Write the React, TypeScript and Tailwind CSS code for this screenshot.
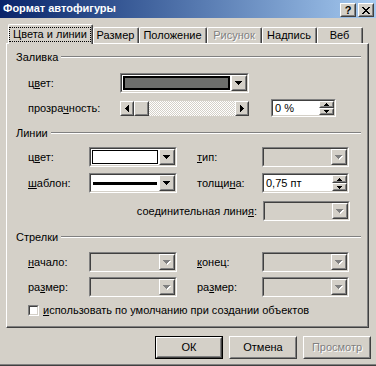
import React from "react";

type Kids = { className?: string; inner?: string; children?: React.ReactNode };

function Raised({ className = "", children }: Kids) {
  return (
    <div className={`shrink-0 bg-[#d4d0c8] border border-t-white border-l-white border-r-[#404040] border-b-[#404040] ${className}`}>
      <div className="w-full h-full flex items-center justify-center border border-t-[#d4d0c8] border-l-[#d4d0c8] border-r-[#808080] border-b-[#808080]">
        {children}
      </div>
    </div>
  );
}

function Sunken({ className = "", inner = "", children }: Kids) {
  return (
    <div className={`shrink-0 border border-t-[#808080] border-l-[#808080] border-r-white border-b-white ${className}`}>
      <div className={`w-full h-full flex border border-t-[#404040] border-l-[#404040] border-r-[#d4d0c8] border-b-[#d4d0c8] ${inner}`}>
        {children}
      </div>
    </div>
  );
}

// pixel triangles
function Down({ gray }: { gray?: boolean }) {
  const c = gray ? "#808080" : "#000";
  return (
    <svg width="8" height="5" viewBox="0 0 8 5" shapeRendering="crispEdges">
      {gray && (
        <g fill="#fff">
          <rect x="1" y="1" width="7" height="1" />
          <rect x="2" y="2" width="5" height="1" />
          <rect x="3" y="3" width="3" height="1" />
          <rect x="4" y="4" width="1" height="1" />
        </g>
      )}
      <g fill={c}>
        <rect x="0" y="0" width="7" height="1" />
        <rect x="1" y="1" width="5" height="1" />
        <rect x="2" y="2" width="3" height="1" />
        <rect x="3" y="3" width="1" height="1" />
      </g>
    </svg>
  );
}

function SmallArrow({ up }: { up?: boolean }) {
  return (
    <svg width="5" height="3" viewBox="0 0 5 3" shapeRendering="crispEdges" fill="#000">
      {up ? (
        <>
          <rect x="2" y="0" width="1" height="1" />
          <rect x="1" y="1" width="3" height="1" />
          <rect x="0" y="2" width="5" height="1" />
        </>
      ) : (
        <>
          <rect x="0" y="0" width="5" height="1" />
          <rect x="1" y="1" width="3" height="1" />
          <rect x="2" y="2" width="1" height="1" />
        </>
      )}
    </svg>
  );
}

function SideArrow({ right }: { right?: boolean }) {
  return (
    <svg width="4" height="7" viewBox="0 0 4 7" shapeRendering="crispEdges" fill="#000">
      {right ? (
        <>
          <rect x="0" y="0" width="1" height="7" />
          <rect x="1" y="1" width="1" height="5" />
          <rect x="2" y="2" width="1" height="3" />
          <rect x="3" y="3" width="1" height="1" />
        </>
      ) : (
        <>
          <rect x="3" y="0" width="1" height="7" />
          <rect x="2" y="1" width="1" height="5" />
          <rect x="1" y="2" width="1" height="3" />
          <rect x="0" y="3" width="1" height="1" />
        </>
      )}
    </svg>
  );
}

function Combo({ className = "", disabled, children }: Kids & { disabled?: boolean }) {
  return (
    <Sunken className={`h-[20px] ${className}`} inner={disabled ? "bg-[#d4d0c8]" : "bg-white"}>
      <div className="flex-1 min-w-0 h-full">{children}</div>
      <Raised className="w-[16px] h-full">
        <Down gray={disabled} />
      </Raised>
    </Sunken>
  );
}

function Spin({ className = "", value }: { className?: string; value: string }) {
  return (
    <Sunken className={`h-[18px] ${className}`} inner="bg-white">
      <div className="flex-1 flex items-center pl-[2px] text-black">{value}</div>
      <div className="w-[15px] h-full flex flex-col">
        <Raised className="w-full flex-1">
          <SmallArrow up />
        </Raised>
        <Raised className="w-full flex-1">
          <SmallArrow />
        </Raised>
      </div>
    </Sunken>
  );
}

function Lbl({ a = "", u, b = "", className = "" }: { a?: string; u: string; b?: string; className?: string }) {
  return (
    <span className={`shrink-0 ${className}`}>
      {a}
      <span className="underline">{u}</span>
      {b}
    </span>
  );
}

function Group({ title, className = "" }: { title: string; className?: string }) {
  return (
    <div className={`h-[14px] flex items-center pl-[9px] pr-[6px] ${className}`}>
      <span>{title}</span>
      <div className="flex-1 ml-[3px] h-[2px] border-t border-t-[#808080] border-b border-b-white" />
    </div>
  );
}

function Tab({ w, label, selected, disabled }: { w: string; label: string; selected?: boolean; disabled?: boolean }) {
  return (
    <div
      className={`${w} ${selected ? "h-[20px] -mb-px relative z-10 bg-[#d4d0c8]" : "h-[16px]"} shrink-0 rounded-t-[2px] border-l border-t border-r border-l-white border-t-white border-r-[#404040]`}
    >
      <div className="h-full flex items-center justify-center border-r border-r-[#808080]">
        {selected ? (
          <span className="border border-dotted border-black px-[3px] leading-[11px] py-[1px]">{label}</span>
        ) : disabled ? (
          <span className="text-[#808080] [text-shadow:1px_1px_0_#fff]">{label}</span>
        ) : (
          <span>{label}</span>
        )}
      </div>
    </div>
  );
}

function Button({ label, def, disabled }: { label: string; def?: boolean; disabled?: boolean }) {
  const btn = (
    <Raised className={def ? "w-[66px] h-[21px]" : "w-[68px] h-[23px]"}>
      <span className={disabled ? "text-[#808080] [text-shadow:1px_1px_0_#fff]" : ""}>{label}</span>
    </Raised>
  );
  return def ? <div className="border border-black">{btn}</div> : btn;
}

export default function App() {
  return (
    <div className="w-[376px] h-[366px] overflow-hidden bg-[#d4d0c8] text-black text-[11px] font-['Liberation_Sans',Arial,sans-serif] border-b border-b-[#404040]">
      <div className="h-full flex flex-col border-b border-b-[#808080]">
        {/* title bar */}
        <div className="h-[18px] shrink-0 flex items-end pb-[1px] pl-[3px] pr-[2px] bg-linear-to-r from-[#0a246a] to-[#a6caf0]">
          <span className="flex-1 self-center text-white font-bold text-[11px]">Формат автофигуры</span>
          <Raised className="w-[16px] h-[14px]">
            <span className="font-bold text-[11px] leading-none">?</span>
          </Raised>
          <Raised className="w-[16px] h-[14px] ml-[2px]">
            <svg width="8" height="7" viewBox="0 0 8 7" shapeRendering="crispEdges" fill="#000">
              <rect x="0" y="0" width="2" height="1" />
              <rect x="6" y="0" width="2" height="1" />
              <rect x="1" y="1" width="2" height="1" />
              <rect x="5" y="1" width="2" height="1" />
              <rect x="2" y="2" width="4" height="1" />
              <rect x="3" y="3" width="2" height="1" />
              <rect x="2" y="4" width="4" height="1" />
              <rect x="1" y="5" width="2" height="1" />
              <rect x="5" y="5" width="2" height="1" />
              <rect x="0" y="6" width="2" height="1" />
              <rect x="6" y="6" width="2" height="1" />
            </svg>
          </Raised>
        </div>

        {/* tabs */}
        <div className="mt-[6px] h-[19px] flex items-end pl-[8px]">
          <Tab w="w-[85px]" label="Цвета и линии" selected />
          <Tab w="w-[46px]" label="Размер" />
          <Tab w="w-[68px]" label="Положение" />
          <Tab w="w-[55px]" label="Рисунок" disabled />
          <Tab w="w-[55px]" label="Надпись" />
          <Tab w="w-[46px]" label="Веб" />
        </div>

        {/* panel */}
        <div className="ml-[6px] w-[363px] h-[285px] shrink-0 border border-t-white border-l-white border-r-[#404040] border-b-[#404040]">
          <div className="h-full flex flex-col border-r border-b border-r-[#808080] border-b-[#808080]">
            <Group title="Заливка" className="mt-[6px]" />
            <div className="mt-[9px] h-[20px] flex items-center pl-[21px]">
              <Lbl a="ц" u="в" b="ет:" className="w-[92px]" />
              <Combo className="w-[129px]">
                <div className="h-full p-[1px]">
                  <div className="h-full border-2 border-black bg-[#6d6e6c]" />
                </div>
              </Combo>
            </div>
            <div className="mt-[6px] h-[18px] flex items-center pl-[21px]">
              <Lbl a="прозра" u="ч" b="ность:" className="w-[92px]" />
              <div className="w-[129px] h-[15px] flex">
                <Raised className="w-[14px] h-full">
                  <SideArrow />
                </Raised>
                <Raised className="w-[15px] h-full" />
                <div className="flex-1 h-full bg-[image:repeating-conic-gradient(#ffffff_0_25%,#d4d0c8_0_50%)] bg-[length:2px_2px]" />
                <Raised className="w-[14px] h-full">
                  <SideArrow right />
                </Raised>
              </div>
              <Spin className="ml-[22px] w-[65px]" value="0 %" />
            </div>

            <Group title="Линии" className="mt-[9px]" />
            <div className="mt-[7px] h-[20px] flex items-center pl-[21px]">
              <Lbl a="ц" u="в" b="ет:" className="w-[61px]" />
              <Combo className="w-[88px]">
                <div className="h-full p-[1px]">
                  <div className="h-full border border-black bg-white" />
                </div>
              </Combo>
              <Lbl u="т" b="ип:" className="ml-[20px] w-[65px]" />
              <Combo className="w-[87px]" disabled />
            </div>
            <div className="mt-[6px] h-[20px] flex items-center pl-[21px]">
              <Lbl u="ш" b="аблон:" className="w-[61px]" />
              <Combo className="w-[88px]">
                <div className="h-full flex items-center px-[2px]">
                  <div className="w-full h-[3px] bg-black" />
                </div>
              </Combo>
              <Lbl a="толщи" u="н" b="а:" className="ml-[20px] w-[65px]" />
              <Spin className="w-[87px] h-[20px]" value="0,75 пт" />
            </div>
            <div className="mt-[8px] h-[20px] flex items-center justify-end pr-[17px]">
              <Lbl a="соединительная лини" u="я" b=":" className="mr-[6px]" />
              <Combo className="w-[87px]" disabled />
            </div>

            <Group title="Стрелки" className="mt-[9px]" />
            <div className="mt-[8px] h-[20px] flex items-center pl-[21px]">
              <Lbl u="н" b="ачало:" className="w-[61px]" />
              <Combo className="w-[88px]" disabled />
              <Lbl u="к" b="онец:" className="ml-[20px] w-[65px]" />
              <Combo className="w-[87px]" disabled />
            </div>
            <div className="mt-[5px] h-[20px] flex items-center pl-[21px]">
              <Lbl a="ра" u="з" b="мер:" className="w-[61px]" />
              <Combo className="w-[88px]" disabled />
              <Lbl a="ра" u="з" b="мер:" className="ml-[20px] w-[65px]" />
              <Combo className="w-[87px]" disabled />
            </div>
            <div className="mt-[7px] h-[12px] flex items-center pl-[21px]">
              <Sunken className="w-[11px] h-[11px]" inner="bg-white" />
              <Lbl u="и" b="спользовать по умолчанию при создании объектов" className="ml-[4px]" />
            </div>
          </div>
        </div>

        {/* buttons */}
        <div className="mt-[8px] flex justify-end gap-[6px] pr-[5px]">
          <Button label="ОК" def />
          <Button label="Отмена" />
          <Button label="Просмотр" disabled />
        </div>
      </div>
    </div>
  );
}
